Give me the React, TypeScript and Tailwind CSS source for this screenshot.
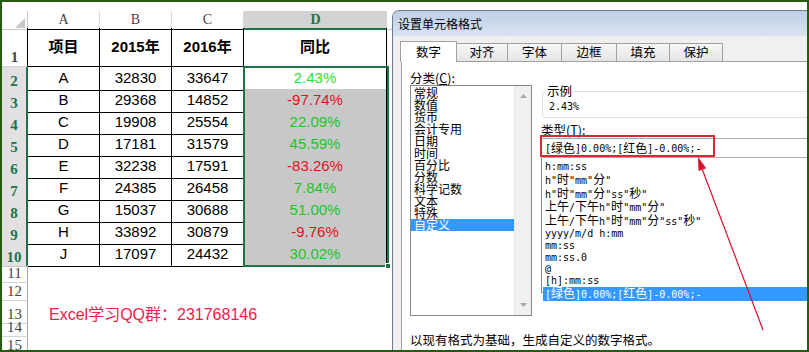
import React from "react";

const data = [
  ["A", "32830", "33647", "2.43%"],
  ["B", "29368", "14852", "-97.74%"],
  ["C", "19908", "25554", "22.09%"],
  ["D", "17181", "31579", "45.59%"],
  ["E", "32238", "17591", "-83.26%"],
  ["F", "24385", "26458", "7.84%"],
  ["G", "15037", "30688", "51.00%"],
  ["H", "33892", "30879", "-9.76%"],
  ["J", "17097", "24432", "30.02%"],
];

const categories = ["常规", "数值", "货币", "会计专用", "日期", "时间", "百分比", "分数", "科学记数", "文本", "特殊", "自定义"];

const formats = [
  "h:mm:ss",
  'h"时"mm"分"',
  'h"时"mm"分"ss"秒"',
  '上午/下午h"时"mm"分"',
  '上午/下午h"时"mm"分"ss"秒"',
  "yyyy/m/d h:mm",
  "mm:ss",
  "mm:ss.0",
  "@",
  "[h]:mm:ss",
  "[绿色]0.00%;[红色]-0.00%;-",
];

const tabs = [
  { label: "对齐", w: "w-[51px]" },
  { label: "字体", w: "w-[54px]" },
  { label: "边框", w: "w-[55px]" },
  { label: "填充", w: "w-[53px]" },
  { label: "保护", w: "w-[53px]" },
];

// CJK runs are drawn a little larger than the half-width mono text, like SimSun
function Mixed({ s }: { s: string }) {
  const parts = s.split(/([\u4e00-\u9fff]+)/);
  return (
    <>
      {parts.map((p, i) =>
        /[\u4e00-\u9fff]/.test(p) ? (
          <span key={i} className="font-['Noto_Sans_CJK_SC',sans-serif] text-[12px]">
            {p}
          </span>
        ) : (
          <span key={i}>{p}</span>
        )
      )}
    </>
  );
}

function RowNum({ n, kind }: { n: number; kind: "top" | "sel" | "plain" }) {
  if (kind === "sel")
    return (
      <div className="flex items-end justify-center border-r-2 border-b border-r-[#217346] border-b-[#cacaca] bg-[#e1e1e1] font-['Liberation_Serif',serif] font-bold leading-[17px] text-[#217346]">
        {n}
      </div>
    );
  if (kind === "top")
    return (
      <div className="flex items-end justify-center border-r border-b border-r-black border-b-[#d4d4d4] font-['Liberation_Serif',serif] leading-[17px] text-[#444]">
        {n}
      </div>
    );
  return (
    <div className="flex items-end justify-center border-r border-b border-r-[#ababab] border-b-[#d4d4d4] font-['Liberation_Serif',serif] leading-[17px] text-[#444]">
      {n}
    </div>
  );
}

function Sheet() {
  return (
    <div className="relative flex w-[390px] shrink-0 flex-col font-['Liberation_Sans','Noto_Sans_CJK_SC',sans-serif] text-[15px] text-black">
      <div className="h-[9px] shrink-0" />
      {/* column letters */}
      <div className="grid h-[17px] shrink-0 grid-cols-[26px_72px_72px_72px_143px_5px] font-['Liberation_Serif',serif] text-[14px] leading-[16px] text-[#444]">
        <div className="flex items-end justify-end border-r border-b border-[#c8c8c8] pr-[2px] pb-[1px]">
          <svg width="10" height="10" viewBox="0 0 10 10">
            <path d="M10 0V10H0Z" fill="#c9c9c9" />
          </svg>
        </div>
        <div className="border-r border-b border-r-[#d8d8d8] border-b-black pt-[1px] text-center">A</div>
        <div className="border-r border-b border-r-[#d8d8d8] border-b-black pt-[1px] text-center">B</div>
        <div className="border-r border-b border-r-[#d8d8d8] border-b-black pt-[1px] text-center">C</div>
        <div className="border-b-2 border-[#217346] bg-[#d3d3d3] pt-[1px] text-center font-bold text-[#217346]">D</div>
        <div className="border-b border-[#c8c8c8]" />
      </div>

      {/* header row */}
      <div className="grid h-[39px] shrink-0 grid-cols-[26px_72px_72px_72px_143px_5px] font-bold">
        <RowNum n={1} kind="top" />
        <div className="flex items-center justify-center border-r border-b border-black">项目</div>
        <div className="flex items-center justify-center border-r border-b border-black">2015年</div>
        <div className="flex items-center justify-center border-r border-b border-black">2016年</div>
        <div className="flex items-center justify-center border-r border-b border-black">同比</div>
        <div />
      </div>

      {data.map((r, i) => (
        <div key={r[0]} className="grid h-[22px] shrink-0 grid-cols-[26px_72px_72px_72px_143px_5px]">
          <RowNum n={i + 2} kind="sel" />
          <div className="flex items-center justify-center border-r border-b border-black">{r[0]}</div>
          <div className="flex items-center justify-center border-r border-b border-black">{r[1]}</div>
          <div className="flex items-center justify-center border-r border-b border-black">{r[2]}</div>
          <div
            className={`flex items-center justify-center border-r border-b border-black ${
              i === 0 ? "bg-white" : "bg-[#c8c8c8]"
            } ${r[3].startsWith("-") ? "text-[#e3101c]" : i === 0 ? "text-[#2fe02f]" : "text-[#1fc41f]"}`}
          >
            {r[3]}
          </div>
          <div />
        </div>
      ))}

      {[11, 12, 13, 14, 15].map((n) => (
        <div key={n} className="grid h-[18px] shrink-0 grid-cols-[26px_72px_72px_72px_143px_5px]">
          <RowNum n={n} kind="plain" />
          {n === 13 ? (
            <div className="col-span-5 flex items-center pt-[5px] pl-[21px] text-[16px] leading-[18px] whitespace-nowrap text-[#f5184a]">
              Excel学习QQ群：231768146
            </div>
          ) : (
            <div className="col-span-5" />
          )}
        </div>
      ))}

      {/* selected range D2:D10 */}
      <div className="absolute top-[64px] left-[241px] h-[201px] w-[146px] border-2 border-[#217346]">
        <div className="absolute -right-[4px] -bottom-[4px] h-[6px] w-[6px] border border-white bg-[#217346]" />
      </div>
    </div>
  );
}

function FormatDialog() {
  return (
    <div className="flex w-[415px] shrink-0 flex-col pt-[8px] font-['Noto_Sans_CJK_SC',sans-serif] text-[12.5px] text-black">
      <div className="flex flex-1 flex-col overflow-hidden rounded-tl-[7px] border-t border-l border-[#6d7d8f] bg-[#f0f0f0]">
        <div className="flex h-[25px] shrink-0 items-center bg-linear-to-b from-[#bccfe5] to-[#d9e4f1] pl-[5px] text-[12px] leading-none">
          设置单元格格式
        </div>

        {/* tabs */}
        <div className="flex h-[25px] shrink-0 items-end pl-[7px] leading-none">
          <div className="relative z-10 -mb-px flex h-[21px] w-[57px] items-center justify-center border-x border-t border-[#a0a0a0] bg-white">
            数字
          </div>
          {tabs.map((t) => (
            <div
              key={t.label}
              className={`flex h-[18px] ${t.w} items-center justify-center border-t border-r border-[#a0a0a0] bg-linear-to-b from-[#f7f7f7] to-[#e5e5e5]`}
            >
              {t.label}
            </div>
          ))}
        </div>

        {/* page */}
        <div className="ml-[8px] flex flex-1 flex-col overflow-hidden border-t border-l border-[#a0a0a0] bg-white">
          <div className="flex">
            {/* category */}
            <div className="mt-[8px] ml-[8px] w-[122px] shrink-0">
              <div className="h-[15px] leading-[15px]">
                分类(<span className="underline">C</span>):
              </div>
              <div className="flex h-[231px] border border-[#828790]">
                <div className="flex-1 pt-[1px] text-[12px] leading-[12px]">
                  {categories.map((c, i) =>
                    i === categories.length - 1 ? (
                      <div key={c} className="bg-[#3399ff] pl-[3px] text-white">
                        {c}
                      </div>
                    ) : (
                      <div key={c} className="pl-[3px]">
                        {c}
                      </div>
                    )
                  )}
                </div>
                <div className="flex w-[17px] flex-col items-center justify-between border-l border-[#e4e4e4] bg-[#f0f0f0] py-[8px]">
                  <svg width="7" height="4" viewBox="0 0 7 4">
                    <path d="M0 4L3.5 0L7 4Z" fill="#a8a8a8" />
                  </svg>
                  <svg width="7" height="4" viewBox="0 0 7 4">
                    <path d="M0 0L3.5 4L7 0Z" fill="#a8a8a8" />
                  </svg>
                </div>
              </div>
            </div>

            {/* sample + type */}
            <div className="ml-[9px] w-[300px] shrink-0 pt-[29px]">
              <div className="relative ml-[1px] h-[27px] rounded-[3px] border border-[#d5dfe5] pt-[9px] pl-[6px] font-['DejaVu_Sans_Mono',monospace] text-[10px] leading-[12px]">
                <span className="absolute -top-[9px] left-[3px] bg-white px-[1px] font-['Noto_Sans_CJK_SC',sans-serif] text-[12.5px] leading-[16px]">
                  示例
                </span>
                2.43%
              </div>
              <div className="mt-[5px] h-[14px] leading-[14px]">
                类型(<span className="underline">T</span>):
              </div>
              <div className="relative mt-[1px]">
                <div className="flex h-[20px] items-center border border-[#abadb3] pl-[3px] font-['DejaVu_Sans_Mono','Noto_Sans_CJK_SC',monospace] text-[10px] whitespace-nowrap">
                  <Mixed s="[绿色]0.00%;[红色]-0.00%;-" />
                </div>
                <div className="absolute -top-[3px] -left-[1px] h-[22px] w-[175px] border-2 border-[#dc2630]" />
              </div>
              <div className="-mt-px h-[136px] border border-[#828790] pt-[3px] font-['DejaVu_Sans_Mono','Noto_Sans_CJK_SC',monospace] text-[10px] leading-[11.8px] whitespace-nowrap">
                {formats.map((f, i) =>
                  i === formats.length - 1 ? (
                    <div key={f} className="ml-[1px] bg-[#3399ff] pl-[2px] text-white">
                      <Mixed s={f} />
                    </div>
                  ) : (
                    <div key={f} className="pl-[3px]">
                      <Mixed s={f} />
                    </div>
                  )
                )}
              </div>
            </div>
          </div>
          <div className="mt-[17px] ml-[8px] h-[14px] leading-[14px] whitespace-nowrap">
            以现有格式为基础，生成自定义的数字格式。
          </div>
        </div>
      </div>
    </div>
  );
}

function Arrow() {
  return (
    <svg className="pointer-events-none absolute top-[-2px] left-[-2px]" width="809" height="352" viewBox="0 0 809 352">
      <line x1="763" y1="330" x2="701" y2="166" stroke="#d8102a" strokeWidth="1.2" />
      <path d="M698 157L706.2 168.2L698.5 171Z" fill="#d8102a" />
    </svg>
  );
}

export default function App() {
  return (
    <div className="relative flex h-[352px] w-[809px] overflow-hidden border-2 border-[#265a10] bg-white">
      <Sheet />
      <FormatDialog />
      <Arrow />
    </div>
  );
}
